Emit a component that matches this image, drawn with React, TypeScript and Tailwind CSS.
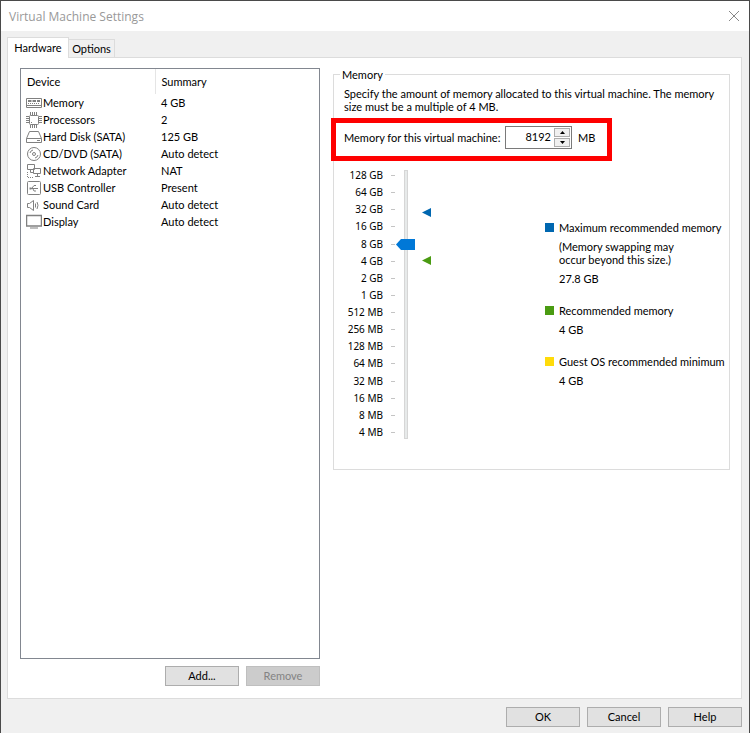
import { useState } from 'react';
import type { ReactNode } from 'react';

interface Device {
  name: string;
  summary: string;
  icon: ReactNode;
}

const DEVICES: Device[] = [
  {
    name: 'Memory',
    summary: '4 GB',
    icon: (
      <>
        <path d="M.5 3.5h15v9H.5z" />
        <path d="M1 10.5h14" />
        <path d="M2 6h3.5M6.5 6H10M11 6h3" strokeWidth="2" />
        <path d="M2 8.5h12" strokeDasharray="1 1" />
      </>
    ),
  },
  {
    name: 'Processors',
    summary: '2',
    icon: (
      <>
        <rect x="3.5" y="3.5" width="9" height="9" rx="1" />
        <path d="M4.5 0v3M6.5 0v3M8.5 0v3M10.5 0v3M4.5 13v3M6.5 13v3M8.5 13v3M10.5 13v3" />
        <path d="M0 4.5h3M0 6.5h3M0 8.5h3M0 10.5h3M13 4.5h3M13 6.5h3M13 8.5h3M13 10.5h3" />
        <path d="M5 10.5h1" />
      </>
    ),
  },
  {
    name: 'Hard Disk (SATA)',
    summary: '125 GB',
    icon: (
      <>
        <path d="M.5 9.5l3-7h9l3 7v4H.5zM.5 9.5h15" />
        <path d="M11 11.5h3" />
      </>
    ),
  },
  {
    name: 'CD/DVD (SATA)',
    summary: 'Auto detect',
    icon: (
      <>
        <circle cx="8" cy="8" r="6.5" />
        <circle cx="8" cy="8" r="1.5" />
        <path d="M4 7a4 4 0 0 1 3-3M12 9a4 4 0 0 1-3 3" />
      </>
    ),
  },
  {
    name: 'Network Adapter',
    summary: 'NAT',
    icon: (
      <>
        <path d="M1.5 1.5h7v5h-7zM7.5 5.5h7v5h-7z" />
        <path d="M4.5 6.5v3h3M11.5 10.5v3M9 13.5h5" />
        <path d="M1.5 9v5.5H8" strokeDasharray="1 1" />
      </>
    ),
  },
  {
    name: 'USB Controller',
    summary: 'Present',
    icon: (
      <>
        <rect x="1.5" y="1.5" width="13" height="13" rx="1" />
        <path d="M4 8.5h8M6 8l2-2.5h2M7 9l1 2h2" />
        <path d="M3.5 8.5h2" strokeWidth="2" />
      </>
    ),
  },
  {
    name: 'Sound Card',
    summary: 'Auto detect',
    icon: (
      <>
        <path d="M1.5 6.5h2l4-3v10l-4-3h-2z" />
        <path d="M9.5 6.5v4M11 5q2 3 0 7" />
      </>
    ),
  },
  {
    name: 'Display',
    summary: 'Auto detect',
    icon: (
      <>
        <path d="M.5 1.5h15v10.5H.5z" strokeWidth="1.5" />
        <path d="M4 14h8" />
      </>
    ),
  },
];

const SIZES = [
  '128 GB', '64 GB', '32 GB', '16 GB', '8 GB', '4 GB', '2 GB', '1 GB',
  '512 MB', '256 MB', '128 MB', '64 MB', '32 MB', '16 MB', '8 MB', '4 MB',
];

const BUTTON = 'h-5 w-[74px] border border-[#adadad] bg-[#e1e1e1] text-center leading-[18px]';

function DeviceList() {
  return (
    <div className="flex-1 border border-[#828790] bg-white">
      <table className="w-full table-fixed border-collapse text-left">
        <thead>
          <tr className="h-[25px]">
            <th className="w-[134px] border-r border-[#e5e5e5] pl-1.5 font-normal">Device</th>
            <th className="pl-1.5 font-normal">Summary</th>
          </tr>
        </thead>
        <tbody>
          {DEVICES.map((device) => (
            <tr key={device.name} className="h-[17px]">
              <td className="p-0 pl-[5px]">
                <div className="flex h-[17px] items-center gap-px whitespace-nowrap">
                  <svg
                    viewBox="0 0 16 16"
                    className="h-4 w-4 shrink-0"
                    fill="none"
                    stroke="#808080"
                    aria-hidden="true"
                  >
                    {device.icon}
                  </svg>
                  {device.name}
                </div>
              </td>
              <td className="p-0 pl-1.5">{device.summary}</td>
            </tr>
          ))}
        </tbody>
      </table>
    </div>
  );
}

function MemoryScale() {
  return (
    <div className="flex">
      <ul className="flex h-[274px] w-[61px] flex-col justify-between">
        {SIZES.map((size) => (
          <li
            key={size}
            className="flex h-[17px] items-center justify-end gap-2 font-['Noto_Sans',sans-serif] text-[10px]"
          >
            {size}
            <span className="h-px w-1 bg-[#c4c4c4]" />
          </li>
        ))}
      </ul>
      {/* Track with its thumb and the recommendation markers */}
      <div className="relative ml-[9px] mt-[3px] w-9">
        <div className="h-[269px] w-1 border border-[#d6d6d6] bg-[#e7eaea]" />
        <svg className="absolute -left-2 top-[69px] h-[11px] w-[19px]" viewBox="0 0 19 11" aria-hidden="true">
          <path d="M0 5.5L5 0h14v11H5z" fill="#0078d7" />
        </svg>
        <svg className="absolute left-[18px] top-[38px] h-[9px] w-[9px]" viewBox="0 0 9 9" aria-hidden="true">
          <path d="M0 4.5L9 0v9z" fill="#0067b0" />
        </svg>
        <svg className="absolute left-[18px] top-[86px] h-[9px] w-[9px]" viewBox="0 0 9 9" aria-hidden="true">
          <path d="M0 4.5L9 0v9z" fill="#4a9b12" />
        </svg>
      </div>
    </div>
  );
}

function Legend() {
  return (
    <dl className="grid w-[181px] grid-cols-[9px_1fr] gap-x-[5px] whitespace-nowrap leading-[13px]">
      <dt className="col-span-2 flex items-center gap-[5px]">
        <span className="h-[9px] w-[9px] shrink-0 bg-[#0067b0]" />
        Maximum recommended memory
      </dt>
      <dd className="col-start-2 mt-1.5">
        (Memory swapping may
        <br />
        occur beyond this size.)
      </dd>
      <dd className="col-start-2 mt-1.5">27.8 GB</dd>
      <dt className="col-span-2 mt-[19px] flex items-center gap-[5px]">
        <span className="h-[9px] w-[9px] shrink-0 bg-[#4a9b12]" />
        Recommended memory
      </dt>
      <dd className="col-start-2 mt-1.5">4 GB</dd>
      <dt className="col-span-2 mt-[19px] flex items-center gap-[5px]">
        <span className="h-[9px] w-[9px] shrink-0 bg-[#ffdb0a]" />
        Guest OS recommended minimum
      </dt>
      <dd className="col-start-2 mt-1.5">4 GB</dd>
    </dl>
  );
}

function MemoryPanel() {
  const [memory, setMemory] = useState(8192);

  return (
    <fieldset className="h-[402px] min-w-0 flex-1 border border-[#dcdcdc] pb-8">
      <legend className="ml-1.5 px-0.5 leading-[13px]">Memory</legend>
      <p className="ml-2.5 mt-1.5 leading-[13px]">
        Specify the amount of memory allocated to this virtual machine. The memory
        <br />
        size must be a multiple of 4 MB.
      </p>
      <div className="-ml-[3px] mt-[5px] flex h-[43px] w-[281px] items-center border-[5px] border-[#fe0000] pb-1 pl-2">
        <label htmlFor="memory" className="w-[161px] whitespace-nowrap">
          Memory for this virtual machine:
        </label>
        <div className="flex h-[23px] w-[67px] border border-[#7a7a7a] bg-white p-px">
          <input
            id="memory"
            type="text"
            value={memory}
            onChange={(event) => setMemory(Number(event.target.value) || 0)}
            className="h-[17px] w-[47px] pr-[3px] text-right outline-none"
          />
          <div className="flex flex-col gap-px">
            <button
              type="button"
              aria-label="Increase memory"
              onClick={() => setMemory(memory + 4)}
              className="flex h-[9px] w-4 items-center justify-center border border-[#adadad] bg-[#f0f0f0]"
            >
              <svg viewBox="0 0 5 3" className="h-[3px] w-[5px]" aria-hidden="true">
                <path d="M0 3L2.5 0L5 3z" />
              </svg>
            </button>
            <button
              type="button"
              aria-label="Decrease memory"
              onClick={() => setMemory(memory - 4)}
              className="flex h-[9px] w-4 items-center justify-center border border-[#adadad] bg-[#f0f0f0]"
            >
              <svg viewBox="0 0 5 3" className="h-[3px] w-[5px]" aria-hidden="true">
                <path d="M0 0L2.5 3L5 0z" />
              </svg>
            </button>
          </div>
        </div>
        <span className="ml-1.5">MB</span>
      </div>
      <div className="mt-1.5 flex justify-between pr-[3px]">
        <MemoryScale />
        <div className="pt-[54px]">
          <Legend />
        </div>
      </div>
    </fieldset>
  );
}

export default function App() {
  return (
    <div className="flex min-h-screen flex-col border border-b-0 border-[#4a4a4a] bg-[#f0f0f0] font-['Lato','Noto_Sans',sans-serif] text-[11px] leading-[17px] text-black">
      <header className="flex h-[30px] items-center justify-between bg-white pl-2 pr-2.5">
        <h1 className="font-['Open_Sans',sans-serif] text-[12px] text-[#999999]">
          Virtual Machine Settings
        </h1>
        <button type="button" aria-label="Close">
          <svg viewBox="0 0 10 10" className="h-2.5 w-2.5" stroke="#888888" aria-hidden="true">
            <path d="M0 0l10 10M10 0L0 10" />
          </svg>
        </button>
      </header>
      <main className="flex flex-1 flex-col pl-1.5 pr-[7px] pt-1.5">
        <div role="tablist" className="-mb-px flex items-end">
          <button
            type="button"
            role="tab"
            aria-selected="true"
            className="z-10 h-[21px] w-[62px] border border-b-0 border-[#dcdcdc] bg-white pb-0.5"
          >
            Hardware
          </button>
          <button
            type="button"
            role="tab"
            aria-selected="false"
            className="h-[19px] w-[46px] border border-l-0 border-[#dcdcdc] bg-[#f0f0f0]"
          >
            Options
          </button>
        </div>
        <div className="flex flex-1 gap-[13px] border border-[#dcdcdc] bg-white pb-3 pl-3 pr-[11px] pt-2.5">
          <section className="flex w-[300px] shrink-0 flex-col">
            <DeviceList />
            <div className="mt-[7px] flex justify-end gap-[7px]">
              <button type="button" className={BUTTON}>
                Add...
              </button>
              <button
                type="button"
                disabled
                className="h-5 w-[74px] border border-[#bfbfbf] bg-[#cccccc] text-center leading-[18px] text-[#838383]"
              >
                Remove
              </button>
            </div>
          </section>
          <MemoryPanel />
        </div>
      </main>
      <footer className="flex h-[34px] items-center justify-end gap-[7px] pr-[7px] pt-0.5">
        <button type="button" className={BUTTON}>
          OK
        </button>
        <button type="button" className={BUTTON}>
          Cancel
        </button>
        <button type="button" className={BUTTON}>
          Help
        </button>
      </footer>
    </div>
  );
}
